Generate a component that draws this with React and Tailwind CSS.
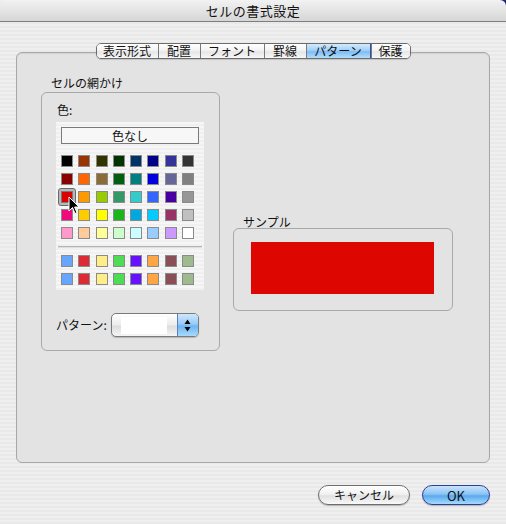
import React from "react";

const FONT = { fontFamily: '"Noto Sans CJK JP", "Liberation Sans", sans-serif' };

const TABS = [
  { label: "表示形式", w: "w-[61px]" },
  { label: "配置", w: "w-[42px]" },
  { label: "フォント", w: "w-[64px]" },
  { label: "罫線", w: "w-[42px]" },
  { label: "パターン", w: "w-[65px]", active: true },
  { label: "保護", w: "w-[39px]" },
];

const MAIN_ROWS = [
  ["#000000", "#993300", "#333300", "#003300", "#003366", "#000088", "#333399", "#333333"],
  ["#880000", "#ff6600", "#8c6c36", "#006010", "#008080", "#0000dd", "#666699", "#808080"],
  ["#dd0000", "#ff9900", "#99cc00", "#339966", "#33cccc", "#3366ff", "#4a00a0", "#969696"],
  ["#ee0a7d", "#ffcc00", "#ffff00", "#1cb51c", "#00a8e0", "#00ccff", "#993366", "#c0c0c0"],
  ["#ff99cc", "#ffcc99", "#ffff99", "#ccffcc", "#ccffff", "#99ccff", "#cc99ff", "#ffffff"],
];

const EXTRA_ROWS = [
  ["#66a6ff", "#dd2a33", "#ffee88", "#4ddd55", "#6611ff", "#ffa544", "#884f55", "#9fba8f"],
  ["#66a6ff", "#dd2a33", "#ffee88", "#4ddd55", "#6611ff", "#ffa544", "#884f55", "#9fba8f"],
];

function Swatch({ color, selected }) {
  if (selected) {
    return (
      <div className="relative w-[12px] h-[12px]">
        <div className="absolute -left-[3px] -top-[3px] w-[18px] h-[18px] rounded-[3px] border border-[#6a6a6a] bg-[#b8b8b8]" />
        <div className="absolute inset-0 border border-[#7a7a7a]" style={{ background: color }} />
      </div>
    );
  }
  return <div className="w-[12px] h-[12px] border border-[#8a8a8a]" style={{ background: color }} />;
}

function Cursor() {
  return (
    <svg className="absolute left-[68px] top-[196px] z-20" width="12" height="19" viewBox="0 0 12 19">
      <path d="M1 1 L1 15 L4.5 11.5 L7 17.5 L9 16.6 L6.6 11 L11 11 Z" fill="#000" stroke="#fff" strokeWidth="1" strokeLinejoin="round" />
    </svg>
  );
}

function Arrows() {
  return (
    <svg width="7" height="13" viewBox="0 0 7 13">
      <path d="M3.5 0.5 L6.5 5 L0.5 5 Z" fill="#000" />
      <path d="M0.5 8 L6.5 8 L3.5 12.5 Z" fill="#000" />
    </svg>
  );
}

export default function App() {
  return (
    <div
      className="relative w-[506px] h-[524px] overflow-hidden bg-[repeating-linear-gradient(180deg,#efefef_0px,#efefef_2px,#e9e9e9_2px,#e9e9e9_4px)] text-[#111]"
      style={FONT}
    >
      {/* desktop peeking at corner */}
      <div className="absolute right-0 top-0 w-[8px] h-[8px] bg-[#1d2a6e]" />

      {/* Title bar */}
      <div className="relative h-[22px] rounded-t-[6px] bg-[linear-gradient(180deg,#f2f2f2,#d6d6d6)] border-b border-[#7e7e7e] flex items-center justify-center">
        <span className="text-[13px] leading-none tracking-[0.5px]">セルの書式設定</span>
      </div>

      {/* Tabs + panel */}
      <div className="px-[16px] pt-[21px] flex flex-col">
        <div className="relative z-10 flex justify-center">
          <div className="flex h-[16px] rounded-[5px] border border-[#6c6c6c] overflow-hidden shadow-[0_1px_1px_rgba(0,0,0,0.15)]">
            {TABS.map((t, i) => (
              <div
                key={t.label}
                className={`${t.w} flex items-center justify-center text-[12px] leading-none ${i > 0 ? "border-l border-[#7a7a7a]" : ""} ${
                  t.active
                    ? "bg-[linear-gradient(180deg,#d2eafd_0%,#a2d0f8_45%,#7cbcf5_55%,#b3defc_100%)] border-r border-r-[#2f4fa0]"
                    : "bg-[linear-gradient(180deg,#ffffff_0%,#f4f4f4_45%,#e6e6e6_55%,#f7f7f7_100%)]"
                }`}
              >
                {t.label}
              </div>
            ))}
          </div>
        </div>

        <div className="-mt-[7px] h-[411px] rounded-[6px] border border-[#a8a8a8] bg-[#e3e3e3] shadow-[inset_0_1px_1px_rgba(0,0,0,0.08)] flex">
          {/* Left group */}
          <div className="ml-[24px] mt-[22px] flex flex-col">
            <div className="ml-[10px] text-[12px] leading-[15px]">セルの網かけ</div>
            <div className="relative mt-[2px] w-[179px] h-[259px] rounded-[6px] border border-[#a9a9a9] bg-[#e3e3e3] flex flex-col">
              <div className="ml-[15px] mt-[9px] text-[12px] leading-[15px]">色:</div>
              <div className="ml-[14px] mt-[5px] w-[148px] h-[168px] bg-[repeating-linear-gradient(180deg,#f6f6f6_0px,#f6f6f6_2px,#f0f0f0_2px,#f0f0f0_4px)] flex flex-col px-[5px] pt-[5px]">
                <div className="h-[17px] border border-[#7a7a7a] bg-[#f7f7f7] flex items-center justify-center text-[12px] leading-none">
                  色なし
                </div>
                <div className="mt-[11px] grid grid-cols-8 gap-y-[6px] w-[138px]">
                  {MAIN_ROWS.flatMap((row, r) =>
                    row.map((c, i) => <Swatch key={`m${r}-${i}`} color={c} selected={r === 2 && i === 0} />)
                  )}
                </div>
                <div className="mt-[7px] -mx-[3px] h-[2px] bg-[#b4b4b4] border-b border-[#dedede]" />
                <div className="mt-[7px] grid grid-cols-8 gap-y-[6px] w-[138px]">
                  {EXTRA_ROWS.flatMap((row, r) => row.map((c, i) => <Swatch key={`e${r}-${i}`} color={c} />))}
                </div>
              </div>

              <div className="mt-[23px] ml-[14px] flex items-center">
                <span className="text-[12px] leading-none">パターン:</span>
                <div className="ml-[4px] w-[88px] h-[24px] rounded-[5px] border border-[#7a7a7a] bg-[linear-gradient(180deg,#ffffff,#ececec_50%,#dcdcdc_55%,#f5f5f5)] flex items-center shadow-[0_1px_1px_rgba(0,0,0,0.2)] overflow-hidden">
                  <div className="ml-[9px] w-[46px] h-[17px] bg-white" />
                  <div className="ml-auto w-[21px] h-full border-l border-[#5c7fc0] bg-[linear-gradient(180deg,#cfe7fc_0%,#9acbf7_45%,#6db5f4_55%,#a9dafc_100%)] flex items-center justify-center">
                    <Arrows />
                  </div>
                </div>
              </div>
            </div>
          </div>

          {/* Right group */}
          <div className="ml-[13px] mt-[161px] flex flex-col">
            <div className="ml-[10px] text-[12px] leading-[15px]">サンプル</div>
            <div className="mt-[-1px] w-[220px] h-[83px] rounded-[6px] border border-[#a9a9a9] bg-[#e3e3e3] flex items-start">
              <div className="ml-[17px] mt-[13px] w-[183px] h-[52px] bg-[#dd0601]" />
            </div>
          </div>
        </div>

        {/* Buttons */}
        <div className="mt-[22px] flex justify-end gap-[12px]">
          <button className="w-[92px] h-[20px] rounded-full border border-[#6e6e6e] bg-[linear-gradient(180deg,#ffffff_0%,#f1f1f1_45%,#e0e0e0_55%,#f9f9f9_100%)] text-[12px] leading-none shadow-[0_1px_1px_rgba(0,0,0,0.25)]">
            キャンセル
          </button>
          <button className="w-[68px] h-[20px] rounded-full border border-[#2c3f96] bg-[linear-gradient(180deg,#c9e3fb_0%,#8cc4f5_45%,#5aa9ef_55%,#a6dafc_100%)] text-[13px] leading-none shadow-[0_1px_1px_rgba(0,0,0,0.25)]">
            OK
          </button>
        </div>
      </div>

      <Cursor />
    </div>
  );
}
